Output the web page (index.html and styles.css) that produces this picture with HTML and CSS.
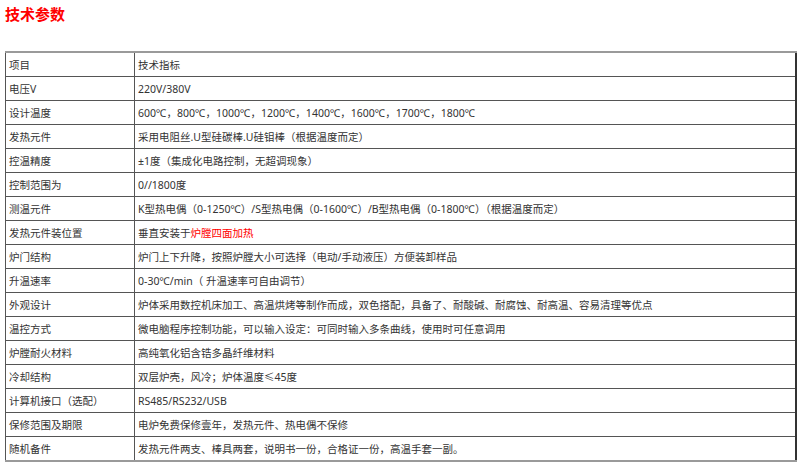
FILE: index.html
```html
<!DOCTYPE html>
<html lang="zh">
<head>
<meta charset="utf-8">
<link rel="stylesheet" href="styles.css">
</head>
<body>
<h2 class="title">技术参数</h2>
<table class="spec">
<colgroup><col class="c1"><col class="c2"></colgroup>
<tr><td>项目</td><td>技术指标</td></tr>
<tr><td>电压V</td><td>220V/380V</td></tr>
<tr><td>设计温度</td><td>600℃，800℃，1000℃，1200℃，1400℃，1600℃，1700℃，1800℃</td></tr>
<tr><td>发热元件</td><td>采用电阻丝.U型硅碳棒.U硅钼棒（根据温度而定）</td></tr>
<tr><td>控温精度</td><td>±1度（集成化电路控制，无超调现象）</td></tr>
<tr><td>控制范围为</td><td>0//1800度</td></tr>
<tr><td>测温元件</td><td>K型热电偶（0-1250℃）/S型热电偶（0-1600℃）/B型热电偶（0-1800℃）（根据温度而定）</td></tr>
<tr><td>发热元件装位置</td><td>垂直安装于<span class="red">炉膛四面加热</span></td></tr>
<tr><td>炉门结构</td><td>炉门上下升降，按照炉膛大小可选择（电动/手动液压）方便装卸样品</td></tr>
<tr><td>升温速率</td><td>0-30℃/min（ 升温速率可自由调节）</td></tr>
<tr><td>外观设计</td><td>炉体采用数控机床加工、高温烘烤等制作而成，双色搭配，具备了、耐酸碱、耐腐蚀、耐高温、容易清理等优点</td></tr>
<tr><td>温控方式</td><td>微电脑程序控制功能，可以输入设定：可同时输入多条曲线，使用时可任意调用</td></tr>
<tr><td>炉膛耐火材料</td><td>高纯氧化铝含锆多晶纤维材料</td></tr>
<tr><td>冷却结构</td><td>双层炉壳，风冷；炉体温度≤45度</td></tr>
<tr><td>计算机接口（选配）</td><td>RS485/RS232/USB</td></tr>
<tr><td>保修范围及期限</td><td>电炉免费保修壹年，发热元件、热电偶不保修</td></tr>
<tr><td>随机备件</td><td>发热元件两支、棒具两套，说明书一份，合格证一份，高温手套一副。</td></tr>
</table>
</body>
</html>
```
FILE: styles.css
```css
html, body {
  margin: 0;
  background: #fff;
}
body {
  padding: 4px 3px 0 5px;
  font-family: "Noto Sans", "Noto Sans CJK SC", sans-serif;
  color: #333;
}
.title {
  margin: 0 0 27px 0;
  font-family: "Noto Sans CJK SC", sans-serif;
  font-size: 15px;
  line-height: 20px;
  font-weight: bold;
  color: #f00;
}
.spec {
  width: 792px;
  border-collapse: collapse;
  table-layout: fixed;
  font-size: 10.5px;
  border-top: 2px solid #9a9a9a;
  border-bottom: 2px solid #9a9a9a;
  border-left: 1px solid #333;
  border-right: 2px solid #333;
}
.c1 { width: 129px; }
.spec td {
  height: 23px;
  padding: 0 3px;
  border: 1px solid #555;
  line-height: 16px;
  vertical-align: middle;
  white-space: nowrap;
  overflow: hidden;
}
.spec tr:first-child td { border-top: 2px solid #9a9a9a; }
.spec tr:last-child td { border-bottom: 2px solid #9a9a9a; }
.red { color: #f00; }
```
